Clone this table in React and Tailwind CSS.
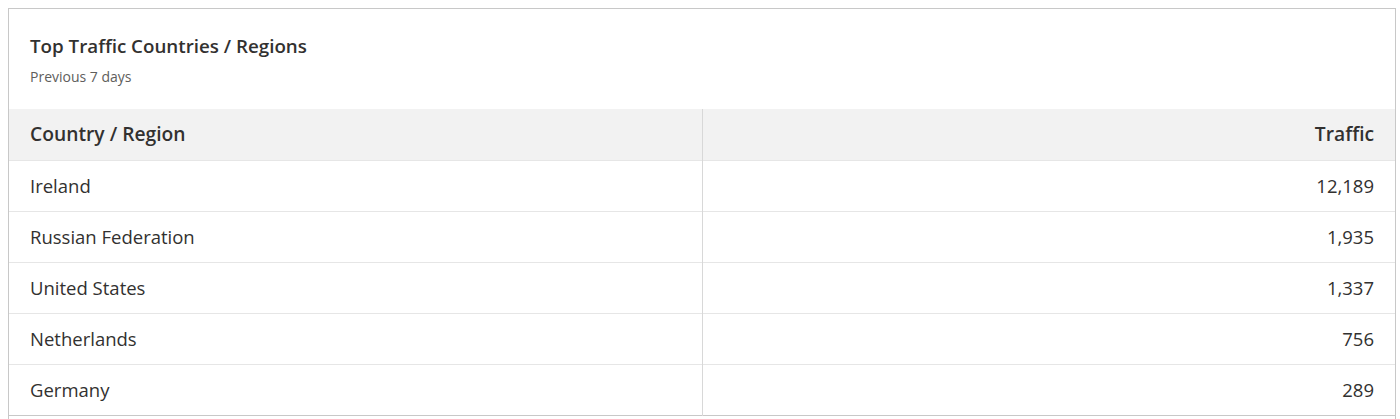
const rows = [
  { name: 'Ireland', traffic: '12,189' },
  { name: 'Russian Federation', traffic: '1,935' },
  { name: 'United States', traffic: '1,337' },
  { name: 'Netherlands', traffic: '756' },
  { name: 'Germany', traffic: '289' },
];

export default function App() {
  return (
    <div className="bg-white pt-2 pl-2 font-['Segoe_UI','Open_Sans',sans-serif] text-[#323130]">
      <div className="w-[1388px] border border-[#c8c8c8] bg-white">
        <div className="px-[21px] pt-[25px] pb-[22px]">
          <h2 className="text-[18.75px] font-semibold leading-6">Top Traffic Countries / Regions</h2>
          <div className="mt-[9px] text-[14px] leading-5 text-[#605e5c]">Previous 7 days</div>
        </div>
        <table className="w-full border-collapse border-b border-[#c8c8c8] text-left text-[18.5px]">
          <thead className="bg-[#f2f2f2]">
            <tr className="h-[51px]">
              <th className="w-[693px] border-r border-[#d8d8d8] px-[21px] text-[19.25px] font-semibold">Country / Region</th>
              <th className="px-[21px] text-right text-[19.25px] font-semibold">Traffic</th>
            </tr>
          </thead>
          <tbody>
            {rows.map((row) => (
              <tr key={row.name} className="h-[51px] border-t border-[#e6e6e6]">
                <td className="border-r border-[#d8d8d8] px-[21px]">{row.name}</td>
                <td className="px-[21px] text-right">{row.traffic}</td>
              </tr>
            ))}
          </tbody>
        </table>
        <div className="h-3" />
      </div>
    </div>
  );
}
